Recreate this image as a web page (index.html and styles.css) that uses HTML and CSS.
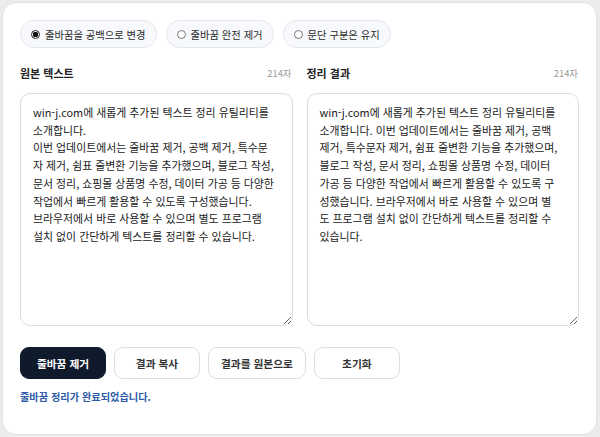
FILE: index.html
```html
<!DOCTYPE html>
<html lang="ko">
<head>
<meta charset="utf-8">
<title>줄바꿈 정리</title>
<link rel="stylesheet" href="styles.css">
</head>
<body>
<main class="card">
  <div class="options">
    <label class="pill"><span class="radio checked"></span>줄바꿈을 공백으로 변경</label>
    <label class="pill"><span class="radio"></span>줄바꿈 완전 제거</label>
    <label class="pill"><span class="radio"></span>문단 구분은 유지</label>
  </div>
  <div class="columns">
    <section class="col">
      <div class="col-head"><span class="title">원본 텍스트</span><span class="count">214자</span></div>
      <textarea class="box" wrap="off" spellcheck="false">win-j.com에 새롭게 추가된 텍스트 정리 유틸리티를
소개합니다.
이번 업데이트에서는 줄바꿈 제거, 공백 제거, 특수문
자 제거, 쉼표 줄변환 기능을 추가했으며, 블로그 작성,
문서 정리, 쇼핑몰 상품명 수정, 데이터 가공 등 다양한
작업에서 빠르게 활용할 수 있도록 구성했습니다.
브라우저에서 바로 사용할 수 있으며 별도 프로그램
설치 없이 간단하게 텍스트를 정리할 수 있습니다.</textarea>
    </section>
    <section class="col">
      <div class="col-head"><span class="title">정리 결과</span><span class="count">214자</span></div>
      <textarea class="box" wrap="off" spellcheck="false">win-j.com에 새롭게 추가된 텍스트 정리 유틸리티를
소개합니다. 이번 업데이트에서는 줄바꿈 제거, 공백
제거, 특수문자 제거, 쉼표 줄변환 기능을 추가했으며,
블로그 작성, 문서 정리, 쇼핑몰 상품명 수정, 데이터
가공 등 다양한 작업에서 빠르게 활용할 수 있도록 구
성했습니다. 브라우저에서 바로 사용할 수 있으며 별
도 프로그램 설치 없이 간단하게 텍스트를 정리할 수
있습니다.</textarea>
    </section>
  </div>
  <div class="actions">
    <button class="btn primary">줄바꿈 제거</button>
    <button class="btn">결과 복사</button>
    <button class="btn wide">결과를 원본으로</button>
    <button class="btn">초기화</button>
  </div>
  <p class="status">줄바꿈 정리가 완료되었습니다.</p>
</main>
</body>
</html>
```
FILE: styles.css
```css
html, body {
  margin: 0;
  background: #ececec;
}
body {
  padding: 2px 3px 2px 2px;
  font-family: "Noto Sans CJK KR", "Noto Sans", sans-serif;
  color: #222;
}
.card {
  box-sizing: border-box;
  height: 433px;
  background: #fff;
  border: 1px solid #e2e2e2;
  border-radius: 14px;
  padding: 17px 17px 0 17px;
}
.options {
  display: flex;
  gap: 9px;
}
.pill {
  box-sizing: border-box;
  height: 28px;
  display: flex;
  align-items: center;
  gap: 5px;
  padding: 0 10px 0 10px;
  border: 1px solid #e3e7ee;
  background: #f7f9fc;
  border-radius: 14px;
  font-size: 10.3px;
  color: #2a2a2a;
}
.radio {
  box-sizing: border-box;
  width: 9px;
  height: 9px;
  border-radius: 50%;
  border: 1px solid #777;
  background: #fff;
}
.radio.checked {
  border: 1px solid #222;
  background: radial-gradient(circle, #111 0 2.6px, #fff 3px);
}
.columns {
  display: grid;
  grid-template-columns: 1fr 1fr;
  gap: 14px;
  margin-top: 16px;
}
.col {
  display: flex;
  flex-direction: column;
}
.col-head {
  display: flex;
  justify-content: space-between;
  align-items: center;
  height: 18px;
  margin-bottom: 11px;
}
.title {
  font-size: 11px;
  font-weight: 700;
  color: #222;
}
.count {
  font-size: 9.4px;
  color: #9a9a9a;
  padding-right: 1px;
}
.box {
  box-sizing: border-box;
  height: 233px;
  width: 100%;
  margin: 0;
  padding: 10px 12px;
  border: 1px solid #dcdcdc;
  border-radius: 10px;
  font-family: "Noto Sans CJK KR", "Noto Sans", sans-serif;
  font-size: 10.9px;
  line-height: 17.7px;
  color: #1a1a1a;
  background: #fff;
  outline: none;
  overflow: hidden;
  white-space: pre;
}
.actions {
  display: flex;
  gap: 8px;
  margin-top: 21px;
}
.btn {
  box-sizing: border-box;
  height: 32px;
  min-width: 86px;
  padding: 0 12px;
  border: 1px solid #dedede;
  border-radius: 9px;
  background: #fff;
  color: #333;
  font-family: "Noto Sans CJK KR", "Noto Sans", sans-serif;
  font-size: 10.7px;
  font-weight: 700;
}
.btn.wide {
  padding: 0 12px;
}
.btn.primary {
  background: #0f1b2d;
  border-color: #0f1b2d;
  color: #fff;
}
.status {
  margin: 10px 0 0 0;
  font-size: 10.2px;
  font-weight: 700;
  color: #2c5aa8;
}
```
